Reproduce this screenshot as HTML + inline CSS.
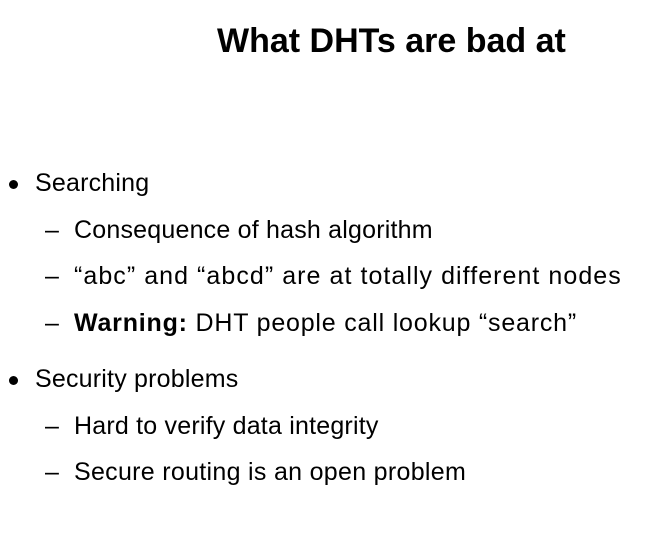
<!DOCTYPE html>
<html><head><style>
body{margin:0;width:649px;height:535px;background:#fff;position:relative;font-family:"Liberation Sans",sans-serif;color:#000;overflow:hidden}
div{position:absolute;white-space:nowrap;font-size:25px;line-height:26px;letter-spacing:0.2px}
.t{font-weight:bold;font-size:34px;line-height:34px;left:217px;top:24px;letter-spacing:0}
.d{position:absolute;left:9px;width:9px;height:9px;border-radius:50%;background:#000}
.m{left:45px;letter-spacing:0}
.x{left:74px}
.y{left:35px}
</style></head><body>
<div class="t">What DHTs are bad at</div>
<span class="d" style="top:180px"></span><div class="y" style="top:170px">Searching</div>
<div class="m" style="top:217px">–</div><div class="x" style="top:217px">Consequence of hash algorithm</div>
<div class="m" style="top:263px">–</div><div class="x" style="top:263px;letter-spacing:1.05px">“abc” and “abcd” are at totally different nodes</div>
<div class="m" style="top:310px">–</div><div class="x" style="top:310px;letter-spacing:0.8px"><b>Warning:</b> DHT people call lookup “search”</div>
<span class="d" style="top:376px"></span><div class="y" style="top:366px">Security problems</div>
<div class="m" style="top:413px">–</div><div class="x" style="top:413px">Hard to verify data integrity</div>
<div class="m" style="top:459px">–</div><div class="x" style="top:459px;letter-spacing:0.3px">Secure routing is an open problem</div>
</body></html>
